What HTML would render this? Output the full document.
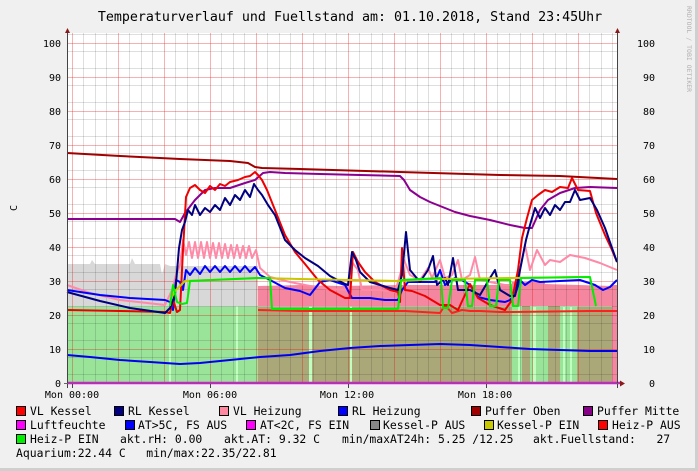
<!DOCTYPE html>
<html><head><meta charset="utf-8"><style>
html,body{margin:0;padding:0;background:#f0f0f0}
svg{display:block}
text{font-family:"DejaVu Sans Mono","Liberation Mono",monospace;fill:#000}
</style></head><body>
<svg width="698" height="471" viewBox="0 0 698 471" xmlns="http://www.w3.org/2000/svg">
<rect x="0" y="0" width="698" height="471" fill="#f0f0f0"/>
<path d="M0 469.5H698M696.5 0V471" stroke="#cfcfcf" stroke-width="3"/>
<text x="350" y="21" font-size="13.3" text-anchor="middle">Temperaturverlauf und Fuellstand am: 01.10.2018, Stand 23:45Uhr</text>
<text transform="translate(687,6) rotate(90)" font-size="6.5" style="fill:#b0b0b0">RRDTOOL / TOBI OETIKER</text>
<text transform="translate(17,211) rotate(-90)" font-size="10">C</text>
<rect x="67" y="33" width="551" height="350" fill="#fff"/>
<path d="M67 264 L90 264 L92 260 L95 264 L130 264 L132 258 L135 264 L160 264 L162 274 L165 264 L170 266 L258 266 L258 306.5 L67 306.5Z" fill="#d8d8d8"/>
<path d="M258 286 L300 285 L340 286 L400 285 L512 285 L512 306 L258 306Z M512 282 L545 282 L545 306 L512 306Z" fill="#f4879f"/>
<path d="M545 284 L612 286 L617 287 L617 306 L545 306Z" fill="#f4879f"/>
<rect x="67" y="306.5" width="191" height="76.5" fill="#9ae49a"/>
<rect x="258" y="306.5" width="254" height="76.5" fill="#aaa878"/>
<rect x="512" y="306.5" width="65" height="76.5" fill="#9ae49a"/>
<rect x="577" y="306.5" width="35" height="76.5" fill="#aaa878"/>
<rect x="612" y="285" width="5" height="98" fill="#f4879f"/>
<g fill="#c0ffc0"><rect x="169" y="306" width="2" height="77"/><rect x="236" y="306" width="2" height="77"/><rect x="309" y="306" width="3" height="77"/><rect x="350" y="306" width="2" height="77"/><rect x="518" y="306" width="2" height="77"/><rect x="533" y="306" width="3" height="77"/><rect x="563" y="306" width="2" height="77"/><rect x="570" y="306" width="2" height="77"/></g>
<g fill="#aaa878"><rect x="522" y="306" width="8" height="77"/><rect x="548" y="306" width="12" height="77"/></g>
<g stroke="#000" stroke-opacity="0.13" stroke-width="1">
<path d="M67 374.5H617M67 357.5H617M67 340.5H617M67 323.5H617M67 306.5H617M67 289.5H617M67 272.5H617M67 255.5H617M67 238.5H617M67 221.5H617M67 204.5H617M67 187.5H617M67 170.5H617M67 153.5H617M67 136.5H617M67 119.5H617M67 102.5H617M67 85.5H617M67 68.5H617M67 51.5H617M67 34.5H617"/>
<path d="M83.5 33V383M95.5 33V383M106.5 33V383M129.5 33V383M141.5 33V383M152.5 33V383M175.5 33V383M187.5 33V383M198.5 33V383M221.5 33V383M233.5 33V383M244.5 33V383M267.5 33V383M279.5 33V383M290.5 33V383M313.5 33V383M325.5 33V383M336.5 33V383M359.5 33V383M371.5 33V383M382.5 33V383M405.5 33V383M417.5 33V383M428.5 33V383M451.5 33V383M463.5 33V383M474.5 33V383M497.5 33V383M509.5 33V383M520.5 33V383M543.5 33V383M555.5 33V383M566.5 33V383M589.5 33V383M601.5 33V383M612.5 33V383"/>
</g>
<g stroke="#e00000" stroke-opacity="0.3" stroke-width="1">
<path d="M67 349.5H617M67 315.5H617M67 281.5H617M67 247.5H617M67 213.5H617M67 179.5H617M67 145.5H617M67 111.5H617M67 77.5H617M67 43.5H617"/>
<path d="M72.5 33V383M118.5 33V383M164.5 33V383M210.5 33V383M256.5 33V383M302.5 33V383M348.5 33V383M394.5 33V383M440.5 33V383M486.5 33V383M532.5 33V383M578.5 33V383"/>
</g>
<g fill="none" stroke-width="2" stroke-linejoin="round">
<polyline stroke="#0000ee" points="67,355 90,357 120,360 150,362 180,364 200,363 230,360 260,357 290,355 320,351 350,348 380,346 410,345 440,344 470,345 500,347 530,349 560,350 590,351 617,351"/>
<polyline stroke="#ff8aa8" points="67,285 90,293 120,300 165,305 172,290 176,275 180,265 183,240 186,255 189,242 192,258 195,242 198,258 201,242 204,258 207,242 210,258 213,243 216,258 219,243 222,258 225,244 228,258 231,245 234,258 237,245 240,258 243,246 246,258 249,246 252,258 256,250 260,268 270,277 290,282 310,286 330,289 348,290 352,262 358,270 362,290 380,290 395,292 400,275 404,260 410,275 420,280 428,268 432,278 440,260 445,278 452,275 458,260 462,280 470,275 475,257 480,280 490,282 505,285 512,285 518,285 520,270 525,245 530,270 537,250 545,265 550,260 560,262 570,255 585,258 600,263 617,270"/>
<polyline stroke="#ff2020" points="258,310 300,311 345,311 350,311 358,311 398,311 405,311 440,313 445,305 452,313 462,310 470,311 480,311 500,312 512,312 590,311 617,311"/>
<polyline stroke="#0000ff" points="67,290 100,295 130,298 165,300 170,302 173,310 176,280 180,282 183,290 186,270 190,275 195,268 200,274 205,266 210,272 215,266 220,272 225,266 230,272 235,266 240,272 245,266 250,272 255,267 260,275 270,280 285,288 300,291 310,295 320,282 330,280 345,285 352,298 370,298 385,300 398,300 402,290 408,282 420,282 435,282 440,270 445,285 455,278 462,280 470,285 478,297 490,300 505,302 510,300 515,295 520,280 525,285 532,280 540,282 560,281 580,280 595,285 603,290 610,287 617,280"/>
<polyline stroke="#8b0090" points="67,219 120,219 175,219 180,222 185,213 195,200 205,190 215,188 230,188 245,183 255,180 263,173 270,172 285,173 320,174 360,175 400,176 404,180 410,190 420,197 430,202 440,206 455,212 470,216 490,220 510,225 525,228 532,228 540,210 548,200 560,193 575,188 590,187 617,188"/>
<polyline stroke="#a00000" points="67,153 120,156 180,159 230,161 248,163 255,167 262,168 300,169 400,172 500,175 560,176 617,179"/>
<polyline stroke="#ee0000" points="67,310 120,311 165,312 170,313 173,300 177,312 180,310 183,250 186,197 190,188 195,185 200,190 205,193 210,186 215,190 220,184 225,186 230,182 238,180 245,177 250,176 255,172 258,175 262,180 267,190 275,210 285,235 295,252 305,264 318,280 330,290 345,298 350,298 353,252 358,262 365,272 375,282 390,290 398,292 400,302 402,248 405,290 412,291 425,296 440,305 450,305 458,310 470,284 478,298 490,305 505,310 512,300 518,270 522,238 527,218 532,200 538,195 545,190 552,192 560,187 568,188 572,178 578,190 590,191 596,213 605,235 612,250 617,262"/>
<polyline stroke="#000080" points="67,292 100,301 130,308 165,313 170,308 175,295 179,248 182,230 185,222 188,210 192,215 195,205 200,215 205,208 210,212 215,205 220,210 225,198 230,205 235,195 240,200 245,190 250,197 254,184 258,190 262,195 268,205 275,215 285,240 295,250 305,258 318,266 330,276 345,284 348,285 352,252 356,260 360,272 370,282 390,288 398,290 402,275 406,232 410,270 420,282 428,270 433,256 437,285 445,278 448,285 453,258 458,290 470,290 480,295 490,278 495,270 500,290 510,296 515,296 518,280 522,260 526,240 530,225 535,208 540,218 545,208 550,215 555,205 560,210 565,202 570,202 575,190 580,200 590,198 597,210 605,228 612,248 617,262"/>
<polyline stroke="#c8c800" points="170,300 176,290 185,281 258,278 300,279 400,281 440,279 512,278 580,277 590,277"/>
<polyline stroke="#00ee00" points="170,306 173,285 177,302 182,304 187,303 190,281 258,278 270,278 272,309 398,309 401,280 441,278 443,308 448,308 452,280 465,280 468,306 472,306 475,280 487,280 490,306 496,306 499,280 510,280 513,306 518,306 521,278 590,277 596,306"/>
</g>
<path d="M67 383H620" stroke="#ff00ff" stroke-width="2.5"/>
<path d="M67.5 31V388M617.5 31V388" stroke="#444" stroke-width="1"/>
<path d="M64 383.5H620" stroke="#666" stroke-width="1"/>
<path d="M65 33L67.5 28L70 33Z M615 33L617.5 28L620 33Z M620 380.5L625 383.5L620 386.5Z" fill="#8b1a1a"/>
<path d="M72.5 384V388M210.5 384V388M348.5 384V388M486.5 384V388" stroke="#444"/>
<g font-size="10" text-anchor="end">
<text x="61" y="47">100</text><text x="61" y="81">90</text><text x="61" y="115">80</text><text x="61" y="149">70</text><text x="61" y="183">60</text><text x="61" y="217">50</text><text x="61" y="251">40</text><text x="61" y="285">30</text><text x="61" y="319">20</text><text x="61" y="353">10</text><text x="61" y="387">0</text>
</g>
<g font-size="10" text-anchor="end">
<text x="655" y="47">100</text><text x="655" y="81">90</text><text x="655" y="115">80</text><text x="655" y="149">70</text><text x="655" y="183">60</text><text x="655" y="217">50</text><text x="655" y="251">40</text><text x="655" y="285">30</text><text x="655" y="319">20</text><text x="655" y="353">10</text><text x="655" y="387">0</text>
</g>
<g font-size="10" text-anchor="middle">
<text x="72" y="398">Mon 00:00</text><text x="210" y="398">Mon 06:00</text><text x="347" y="398">Mon 12:00</text><text x="485" y="398">Mon 18:00</text>
</g>
<g stroke="#000" stroke-width="1">
<rect x="16.5" y="406.5" width="9" height="9" fill="#ff0000"/>
<rect x="114.5" y="406.5" width="9" height="9" fill="#000080"/>
<rect x="219.5" y="406.5" width="9" height="9" fill="#ff88a0"/>
<rect x="338.5" y="406.5" width="9" height="9" fill="#0000ff"/>
<rect x="471.5" y="406.5" width="9" height="9" fill="#a00000"/>
<rect x="583.5" y="406.5" width="9" height="9" fill="#880088"/>
<rect x="16.5" y="420.5" width="9" height="9" fill="#ff00ff"/>
<rect x="125.5" y="420.5" width="9" height="9" fill="#0000ff"/>
<rect x="246.5" y="420.5" width="9" height="9" fill="#ff00ff"/>
<rect x="370.5" y="420.5" width="9" height="9" fill="#888888"/>
<rect x="484.5" y="420.5" width="9" height="9" fill="#c8c800"/>
<rect x="598.5" y="420.5" width="9" height="9" fill="#ff0000"/>
<rect x="16.5" y="434.5" width="9" height="9" fill="#00ee00"/>
</g>
<g font-size="11.4">
<text x="30" y="415">VL Kessel</text><text x="128" y="415">RL Kessel</text><text x="233" y="415">VL Heizung</text><text x="352" y="415">RL Heizung</text><text x="485" y="415">Puffer Oben</text><text x="597" y="415">Puffer Mitte</text>
<text x="30" y="429">Luftfeuchte</text><text x="138" y="429">AT&gt;5C, FS AUS</text><text x="260" y="429">AT&lt;2C, FS EIN</text><text x="383" y="429">Kessel-P AUS</text><text x="497" y="429">Kessel-P EIN</text><text x="612" y="429">Heiz-P AUS</text>
<text x="30" y="443">Heiz-P EIN</text><text x="120" y="443">akt.rH: 0.00</text><text x="224" y="443">akt.AT: 9.32 C</text><text x="342" y="443">min/maxAT24h: 5.25 /12.25</text><text x="533" y="443" xml:space="preserve">akt.Fuellstand:   27</text>
<text x="16" y="457" xml:space="preserve">Aquarium:22.44 C   min/max:22.35/22.81</text>
</g>
</svg>
</body></html>
